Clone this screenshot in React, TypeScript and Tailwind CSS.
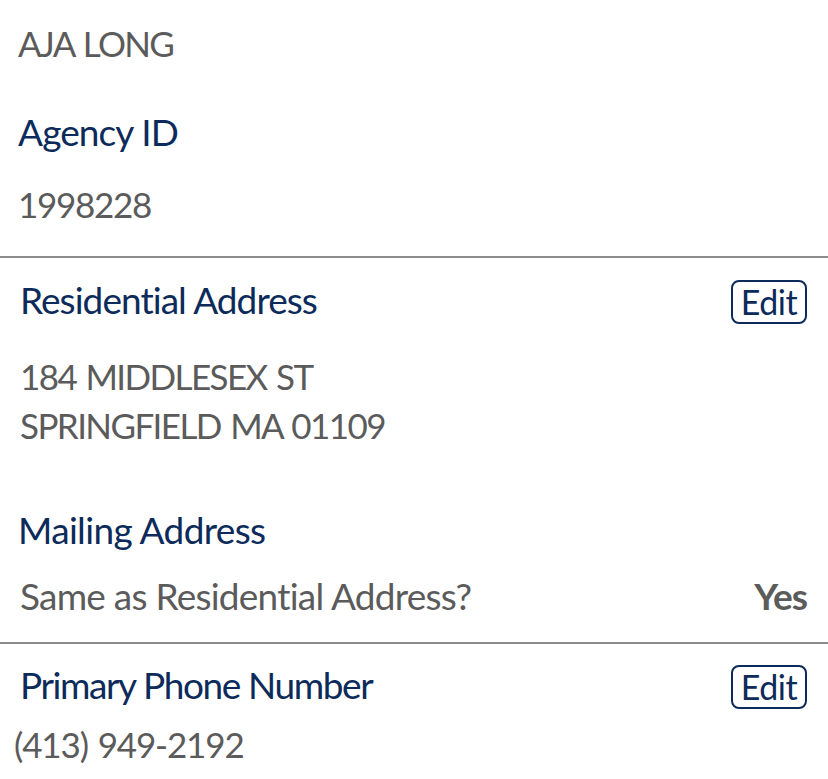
import React from 'react';

const navy = 'text-[#0d2b5a]';
const gray = 'text-[#5b5b5b]';
// values are set a bit smaller than labels, with word gaps kept open
const value = 'text-[35px] [word-spacing:2px]';

const EditButton: React.FC = () => (
  <button className="mt-[5px] flex h-[44px] w-[76px] items-center justify-center rounded-[8px] border-2 border-[#0d2b5a] pb-[1px] text-[34px] leading-none tracking-[-0.5px] text-[#0d2b5a]">
    Edit
  </button>
);

const App: React.FC = () => {
  return (
    <div className="min-h-[779px] w-[828px] bg-white font-['Lato','Liberation_Sans',sans-serif] text-[37px] leading-[49px]">
      {/* name + agency */}
      <section className="pl-[18px] pt-[19px]">
        <p className={`${value} tracking-[-1.7px] ${gray}`}>AJA LONG</p>
        <p className={`mt-[39px] tracking-[-0.9px] ${navy}`}>Agency ID</p>
        <p className={`mt-[24px] ${value} tracking-[-1.3px] ${gray}`}>1998228</p>
      </section>

      <div className="mt-[27px] h-[2px] bg-[#8c8c8c]" />

      {/* addresses */}
      <section className="pl-[20px] pr-[21px] pt-[17px]">
        <div className="flex items-start justify-between">
          <p className={`tracking-[-0.95px] ${navy}`}>Residential Address</p>
          <EditButton />
        </div>
        <div className={`mt-[28px] ${value} tracking-[-1.6px] ${gray}`}>
          <p>184 MIDDLESEX ST</p>
          <p>SPRINGFIELD MA 01109</p>
        </div>
        <p className={`mt-[55px] -ml-[2px] tracking-[-0.65px] ${navy}`}>Mailing Address</p>
        <div className="mt-[17px] flex justify-between">
          <p className={`tracking-[-0.76px] ${gray}`}>Same as Residential Address?</p>
          <p className={`font-bold tracking-[-1px] ${gray}`}>Yes</p>
        </div>
      </section>

      <div className="mt-[22px] h-[2px] bg-[#8c8c8c]" />

      {/* phone */}
      <section className="pl-[20px] pr-[21px] pt-[16px]">
        <div className="flex items-start justify-between">
          <p className={`tracking-[-1.4px] ${navy}`}>Primary Phone Number</p>
          <EditButton />
        </div>
        <p className={`mt-[11px] -ml-[6px] ${value} tracking-[-1.15px] ${gray}`}>(413) 949-2192</p>
      </section>
    </div>
  );
};

export default App;
